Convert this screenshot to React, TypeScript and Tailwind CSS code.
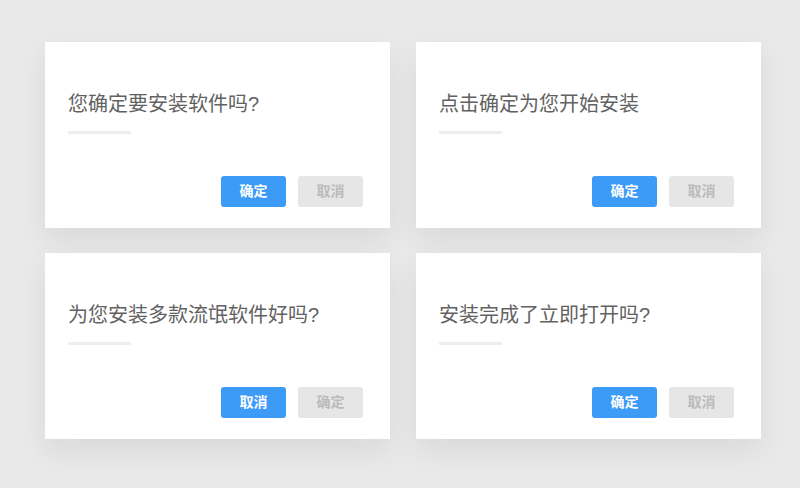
import React from "react";

type Card = { title: string; primary: string; secondary: string };

const cards: Card[] = [
  { title: "您确定要安装软件吗?", primary: "确定", secondary: "取消" },
  { title: "点击确定为您开始安装", primary: "确定", secondary: "取消" },
  { title: "为您安装多款流氓软件好吗?", primary: "取消", secondary: "确定" },
  { title: "安装完成了立即打开吗?", primary: "确定", secondary: "取消" },
];

export default function App() {
  return (
    <div
      className="w-[800px] h-[488px] bg-[#e9e9e9] pl-[45px] pt-[42px]"
      style={{ fontFamily: '"Liberation Sans", "Noto Sans CJK SC", sans-serif' }}
    >
      <div className="grid grid-cols-[345px_345px] gap-x-[26px] gap-y-[25px]">
        {cards.map((c, i) => (
          <div
            key={i}
            className="bg-white h-[186px] flex flex-col pl-[23px] pr-[27px] pt-[48px] shadow-[0_12px_28px_rgba(0,0,0,0.07)]"
          >
            <div className="text-[20px] leading-[28px] text-[#626262]">{c.title}</div>
            <div className="mt-[13px] w-[63px] h-[3px] bg-[#eeeeee]" />
            <div className="mt-[42px] flex justify-end gap-[12px]">
              <button className="w-[65px] h-[31px] rounded-[3px] bg-[#3d9bf8] text-white text-[14px] font-bold leading-[31px]">
                {c.primary}
              </button>
              <button className="w-[65px] h-[31px] rounded-[3px] bg-[#e6e6e6] text-[#bbbbbb] text-[14px] font-bold leading-[31px]">
                {c.secondary}
              </button>
            </div>
          </div>
        ))}
      </div>
    </div>
  );
}
